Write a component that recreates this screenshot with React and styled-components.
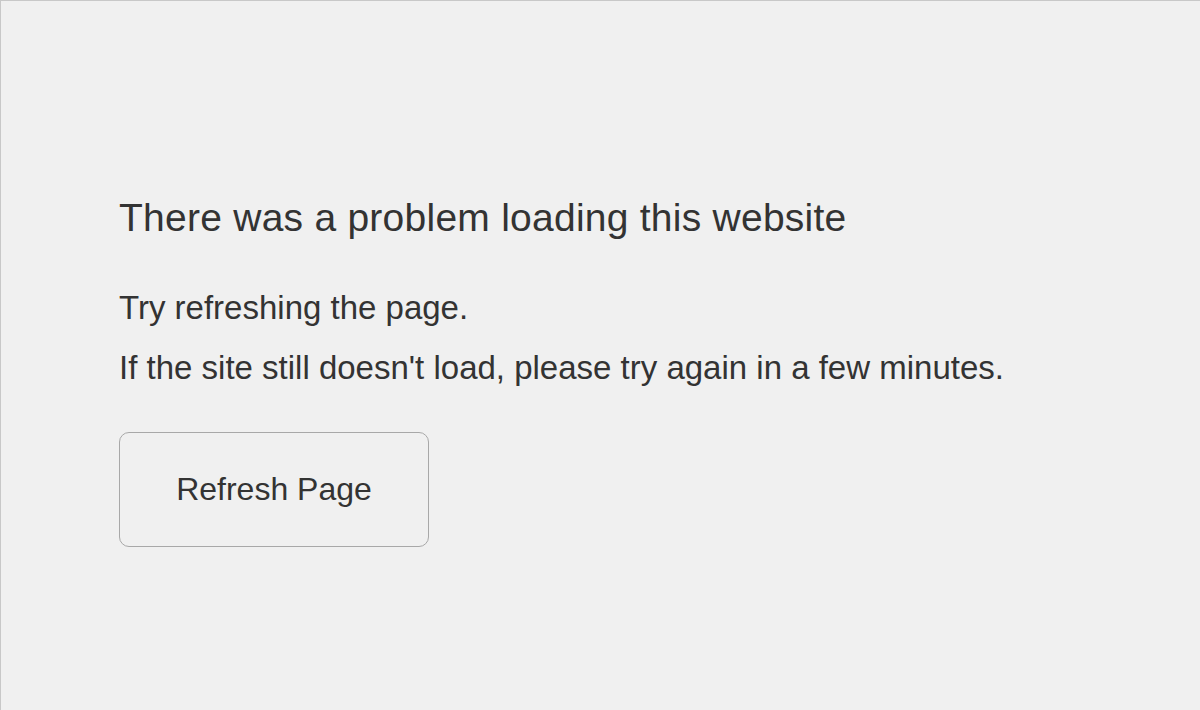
import React from "react";
import styled, { createGlobalStyle } from "styled-components";

const Global = createGlobalStyle`
  html, body { margin: 0; padding: 0; background: #f0f0f0; }
  body { font-family: "Liberation Sans", Arial, Helvetica, sans-serif; color: #333; }
`;

const Frame = styled.div`
  box-sizing: border-box;
  width: 1200px;
  height: 710px;
  border-top: 1px solid #c8c8c8;
  border-left: 1px solid #c8c8c8;
  background: #f0f0f0;
  padding: 194px 0 0 118px;
`;

const Title = styled.h1`
  margin: 0 0 47px;
  font-size: 39px;
  font-weight: 400;
  letter-spacing: 0.25px;
  line-height: 46px;
  color: #333;
`;

const Text = styled.p`
  margin: 0 0 ${(p) => p.$gap}px;
  font-size: 33px;
  line-height: 40px;
  color: #333;
`;

const Button = styled.button`
  box-sizing: border-box;
  display: block;
  width: 310px;
  height: 115px;
  padding: 0;
  border: 1.5px solid #a8a8a8;
  border-radius: 10px;
  background: #f0f0f0;
  font-family: "Liberation Sans", Arial, Helvetica, sans-serif;
  font-size: 32px;
  color: #333;
  cursor: pointer;
`;

export default function App() {
  return (
    <>
      <Global />
      <Frame>
        <Title>There was a problem loading this website</Title>
        <Text $gap={20}>Try refreshing the page.</Text>
        <Text $gap={44}>If the site still doesn't load, please try again in a few minutes.</Text>
        <Button>Refresh Page</Button>
      </Frame>
    </>
  );
}
